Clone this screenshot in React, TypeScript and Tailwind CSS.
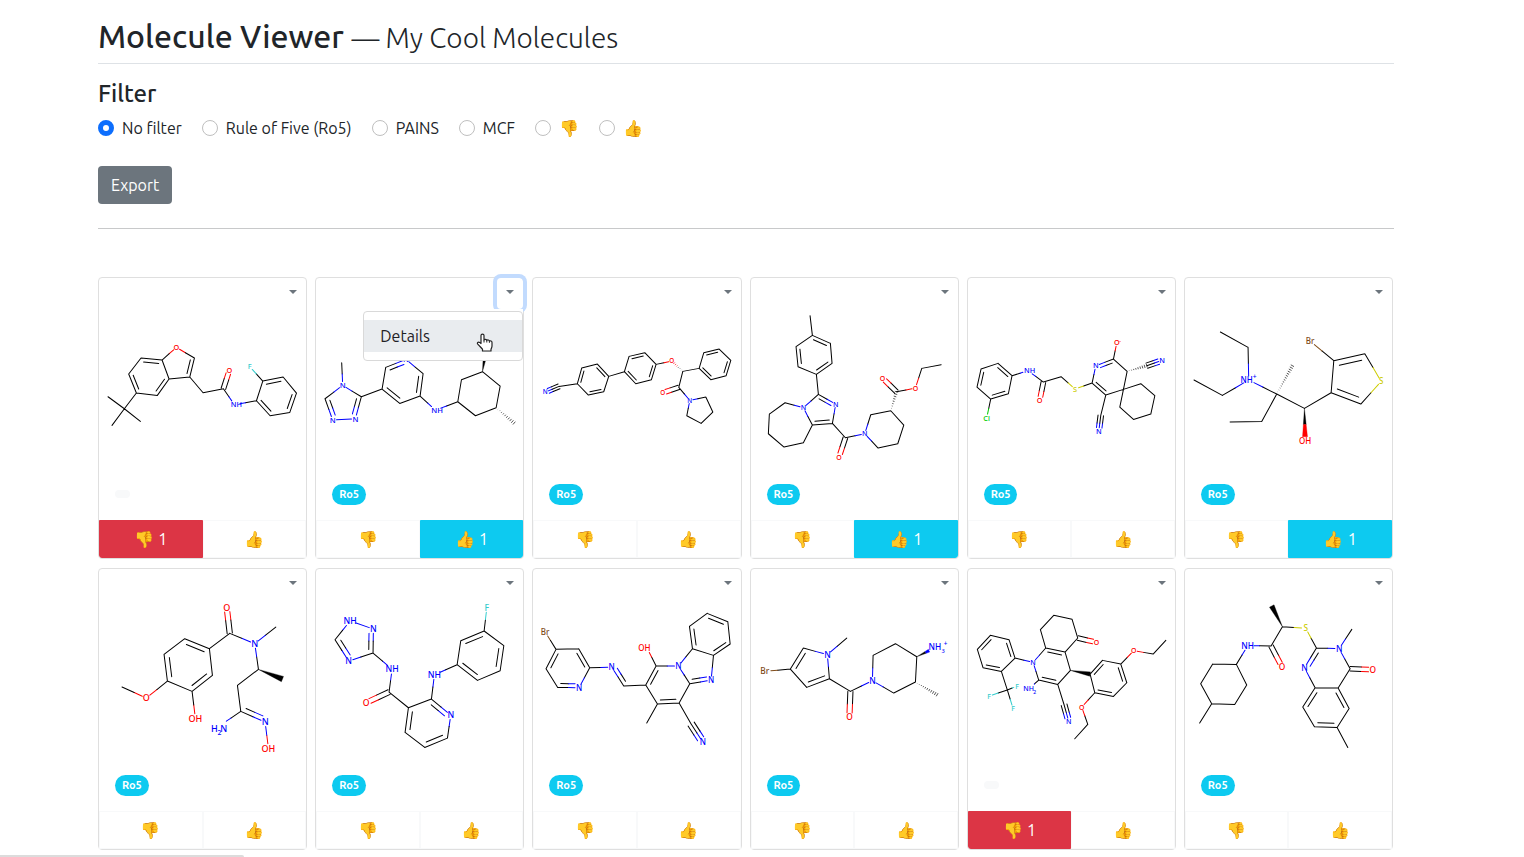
import { useState } from "react";

type Atom = { p: [number, number]; el?: string; label?: string; lx?: number };
type Extra = { x: number; y: number; text: string; el: string; size: number };
type Molecule = {
  view: string;
  font: number;
  atoms: string;
  bonds: string;
  rings: string;
  extras?: Extra[];
};
type CardData = { mol: Molecule; ro5: boolean; down?: number; up?: number; menu?: boolean };

const COLORS: Record<string, string> = {
  C: "#000000",
  N: "#0000ff",
  O: "#ff0000",
  F: "#33cccc",
  S: "#cccc00",
  Cl: "#00cc00",
  Br: "#7f4c19",
};

const ROW_ONE = "10 118 621 492";
const ROW_TWO = "10 106 621 492";

/* Atoms: "x,y[,element[,label[,labelX]]]". Bonds: "-" single, "=" double, "<" ">" one-sided double,
   "#" triple, "w" wedge, "h" hashed wedge. Rings: atom indexes, used to place inner lines. */
const molecules: Molecule[] = [
  {
    view: ROW_ONE,
    font: 22,
    atoms:
      "242,233,O 296,265 282,322 220,328 199,271 136,265 99,313 122,370 185,377 86,417 37,381 134,455 49,467 322,369 383,357 401,301,O 416,405,N,NH,422 482,393 501,334 462,291,F 562,322 602,370 582,428 523,438",
    bonds:
      "0-1 1=2 2-3 3-4 4-0 4=5 5-6 6=7 7-8 8=3 7-9 9-10 9-11 9-12 2-13 13-14 14=15 14-16 16-17 17-18 18-19 18=20 20-21 21=22 22-23 23=17",
    rings: "0 1 2 3 4|3 4 5 6 7 8|17 18 20 21 22 23",
  },
  {
    view: ROW_ONE,
    font: 23,
    atoms:
      "87,279 90,347,N 146,381 128,447,N 60,451,N 37,387 208,358 219,293 280,269,N 331,312 322,379 261,401 368,421,N,NH,373 435,396 446,330 509,306 562,349 550,414 488,438 518,250 604,460",
    bonds:
      "0-1 1-2 2=3 3-4 4=5 5-1 2-6 6-7 7=8 8-9 9=10 10-11 11=6 10-12 12-13 13-14 14-15 15-16 16-17 17-18 18-13 15w19 17h20",
    rings: "1 2 3 4 5|6 7 8 9 10 11",
  },
  {
    view: ROW_ONE,
    font: 19,
    atoms:
      "47,367,N 88,350 143,342 156,295 203,283 237,320 222,366 176,376 284,306 298,260 345,249 379,284 365,330 318,342 426,274,O 459,305 508,296 522,249 568,238 603,272 589,318 543,330 447,353 399,369,O 480,392,N 528,382 549,427 514,461 471,438",
    bonds:
      "0#1 1-2 2=3 3-4 4=5 5-6 6=7 7-2 5-8 8-9 9=10 10-11 11=12 12-13 13=8 11-14 15h14 15-16 16-17 17=18 18-19 19=20 20-21 21=16 15-22 22=23 22-24 24-25 25-26 26-27 27-28 28-24",
    rings: "2 3 4 5 6 7|8 9 10 11 12 13|16 17 18 19 20 21",
  },
  {
    view: ROW_ONE,
    font: 21,
    atoms:
      "187,138 194,197 248,221 253,281 206,314 151,291 145,231 212,374 264,403,N 254,461 194,466 167,414,N 112,399 65,433 62,492 109,532 167,519 293,504 274,562,O 351,492,N 369,435 429,423 468,466 450,522 391,535 446,366 404,325,O 503,355,O 522,296 580,285",
    bonds:
      "0-1 1=2 2-3 3=4 4-5 5=6 6-1 4-7 7=8 8-9 9=10 10-11 11-7 11-12 12-13 13-14 14-15 15-16 16-10 9-17 17=18 17-19 19-20 20-21 21-22 22-23 23-24 24-19 21h25 25=26 25-27 27-28 28-29",
    rings: "1 2 3 4 5 6|7 8 9 10 11",
  },
  {
    view: ROW_ONE,
    font: 22,
    atoms:
      "37,352 49,298 100,281 142,318 131,372 78,388 66,445,Cl 190,303,N,NH,195 236,337 225,392,O 289,321 331,358,S 382,340 393,288,N 446,268 456,219,O 487,305 476,359 423,376 408,437 402,485,N 546,288 592,272,N 528,342 570,378 558,433 506,449 465,412",
    bonds:
      "0=1 1-2 2=3 3-4 4=5 5-0 5-6 3-7 7-8 8=9 8-10 10-11 11-12 12-13 13=14 14-15 14-16 16-17 17-18 18=12 18-19 19#20 16h21 21#22 17-23 23-24 24-25 25-26 26-27 27-17",
    rings: "0 1 2 3 4 5|12 13 14 16 17 18",
    extras: [{ x: 466, y: 213, text: "-", el: "O", size: 16 }],
  },
  {
    view: ROW_ONE,
    font: 24,
    atoms:
      "116,187 199,233 201,331,N,NH,195 122,377 37,331 285,373 332,288 240,455 145,457 368,416 370,513,O,OH 448,369 456,273 385,214,Br 549,252 598,335,S 537,403",
    bonds: "0-1 1-2 2-3 3-4 2-5 5h6 5-7 7-8 5-9 9w10 9-11 11-12 12-13 12=14 14-15 15-16 16=11",
    rings: "11 12 14 15 16",
    extras: [{ x: 219, y: 322, text: "+", el: "N", size: 20 }],
  },
  {
    view: ROW_TWO,
    font: 27,
    atoms:
      "393,128,O 402,206 477,237,N 540,187 488,314 560,343 425,362 435,440 376,480,N,_ 508,472,N 518,551,O,OH 341,252 267,222 205,269 215,349 289,380 350,332 299,461,O,OH 152,400,O 79,367",
    bonds:
      "0=1 1-2 2-3 2-4 4w5 4-6 6-7 7-8 7<9 9-10 1-11 11=12 12-13 13=14 14-15 15=16 16-11 15-17 14-18 18-19",
    rings: "11 12 13 14 15 16",
    extras: [
      { x: 356, y: 491, text: "H", el: "N", size: 27 },
      { x: 371, y: 504, text: "2", el: "N", size: 20 },
      { x: 384, y: 491, text: "N", el: "N", size: 27 },
    ],
  },
  {
    view: ROW_TWO,
    font: 26,
    atoms:
      "112,169,N,NH 182,193,N 181,265 108,289,N 67,225 238,314,N,NH 229,382 160,414,O 287,429 356,403 414,451,N 404,520 336,548 277,503 365,330,N,NH 433,300 444,228 514,199 573,243 562,318 494,347 522,130,F",
    bonds:
      "0-1 1=2 2-3 3=4 4-0 2-5 5-6 6=7 6-8 8=13 13-12 12=11 11-10 10=9 9-8 9-14 14-15 15-16 16=17 17-18 18=19 19-20 20=15 17-21",
    rings: "0 1 2 3 4|8 9 10 11 12 13|15 16 17 18 19 20",
  },
  {
    view: "661 106 621 492",
    font: 24,
    atoms:
      "697,201,Br 730,254 798,252 831,309 799,369,N 735,368 700,312 897,307,N 933,364 999,361 1030,304 1003,250,O,OH,995 1097,304,N 1131,357 1099,415 1034,418 1002,475 1135,478 1170,532,N 1195,346,N 1202,272 1139,252 1130,185 1183,146 1245,171 1252,238",
    bonds:
      "0-1 1-2 2=3 3-4 4=5 5-6 6=1 3-7 7<8 8-9 9=10 10-11 10-12 12-13 13-14 14=15 15-9 15-16 14-17 17#18 13=19 19-20 20-21 21-12 21=22 22-23 23=24 24-25 25=20",
    rings: "1 2 3 4 5 6|9 10 12 13 14 15|12 13 19 20 21|20 21 22 23 24 25",
  },
  {
    view: ROW_TWO,
    font: 25,
    atoms:
      "297,220 239,270,N 167,250 128,313 51,320,Br 177,368 245,342 308,380 305,457,O 374,348,N 376,272 443,237 507,276 503,352 438,385 560,250,N,_ 568,390",
    bonds: "0-1 1-2 2=3 3-4 3-5 5=6 6-1 6-7 7=8 7-9 9-10 10-11 11-12 12-13 13-14 14-9 12w15 13h16",
    rings: "1 2 3 5 6",
    extras: [
      { x: 561, y: 247, text: "NH", el: "N", size: 25 },
      { x: 586, y: 260, text: "3", el: "N", size: 17 },
      { x: 593, y: 238, text: "+", el: "N", size: 19 },
    ],
  },
  {
    view: ROW_TWO,
    font: 21,
    atoms:
      "38,254 77,212 133,225 151,280 110,320 55,309 205,293,N 243,250 227,195 267,152 322,164 339,220 395,233,O 301,262 317,317 279,359 222,346 198,368,N,_ 298,420 312,470,N 376,328 413,287 468,298 486,354 446,395 390,384 351,427,O 369,479 330,522 507,258,O 565,268 603,227 128,376 73,394,F 157,364,F 145,431,F",
    bonds:
      "0=1 1-2 2=3 3-4 4=5 5-0 3-6 6-7 7>13 7-8 8-9 9-10 10-11 11=12 11-13 13-14 14-15 15=16 16-6 16-17 15-18 18#19 14w20 20=21 21-22 22=23 23-24 24=25 25-20 25-26 26-27 27-28 22-29 29-30 30-31 4-32 32-33 32-34 32-35",
    rings: "0 1 2 3 4 5|6 7 13 14 15 16|20 21 22 23 24 25",
    extras: [
      { x: 192, y: 371, text: "NH", el: "N", size: 21 },
      { x: 210, y: 381, text: "2", el: "N", size: 15 },
    ],
  },
  {
    view: ROW_TWO,
    font: 25,
    atoms:
      "270,124 302,186 372,191,S 268,244 301,307,O 198,243,N,NH 164,299 195,361 159,419 90,417 57,357 93,298 54,475 404,250 368,309,N 400,369 469,370 505,312 472,252,N 510,194 573,315,O 502,431 466,488 398,486 363,427 498,548",
    bonds:
      "1w0 1-2 1-3 3=4 3-5 5-6 6-7 7-8 8-9 9-10 10-11 11-6 9-12 2-13 13=14 14-15 15-16 16-17 17-18 18-13 18-19 17=20 16=21 21-22 22=23 23-24 24=15 22-25",
    rings: "13 14 15 16 17 18|15 16 21 22 23 24",
  },
];

const names = [
  "Benzofuran acetamide",
  "Triazolyl pyridine",
  "Biaryl nitrile",
  "Imidazoazepine",
  "Spiro dinitrile",
  "Bromothiophene",
  "Amidoxime",
  "Triazole carboxamide",
  "Benzimidazole imine",
  "Bromopyrrole amide",
  "Hexahydroquinoline",
  "Quinazolinone",
];

const cards: CardData[] = molecules.map((mol, i) => ({
  mol,
  ro5: i !== 0 && i !== 10,
  down: i === 0 || i === 10 ? 1 : undefined,
  up: i === 1 || i === 3 || i === 5 ? 1 : undefined,
  menu: i === 1,
}));

function parseAtoms(src: string): Atom[] {
  return src.split(" ").map((s) => {
    const [x, y, el, label, lx] = s.split(",");
    return { p: [Number(x), Number(y)], el, label, lx: lx ? Number(lx) : undefined };
  });
}

function Structure({ mol, title }: { mol: Molecule; title: string }) {
  const atoms = parseAtoms(mol.atoms);
  const centers = mol.rings.split("|").map((r) => {
    const ids = r.split(" ").map(Number);
    return [
      ids.reduce((s, i) => s + atoms[i].p[0], 0) / ids.length,
      ids.reduce((s, i) => s + atoms[i].p[1], 0) / ids.length,
    ];
  });
  const lines: Record<string, string> = {};
  const fills: { d: string; color: string }[] = [];
  const add = (el: string, x1: number, y1: number, x2: number, y2: number) => {
    lines[el] = (lines[el] ?? "") + `M${x1.toFixed(1)} ${y1.toFixed(1)}L${x2.toFixed(1)} ${y2.toFixed(1)}`;
  };

  for (const b of mol.bonds.split(" ")) {
    const m = /(\d+)([-=<>#wh])(\d+)/.exec(b);
    if (!m) continue;
    const a = atoms[Number(m[1])];
    const c = atoms[Number(m[3])];
    const kind = m[2];
    const dx = c.p[0] - a.p[0];
    const dy = c.p[1] - a.p[1];
    const len = Math.hypot(dx, dy);
    const nx = dy / len;
    const ny = -dx / len;
    const trim = mol.font * 0.5;
    const gap = (t: Atom) => {
      if (!t.el) return 0;
      const wide = t.label || t.el.length > 1;
      return wide ? trim + Math.abs(dx / len) * mol.font * 0.25 : trim;
    };
    const ta = gap(a) / len;
    const tc = 1 - gap(c) / len;
    const ea = a.el ?? "C";
    const ec = c.el ?? "C";
    const stroke = (off: number, t0: number, t1: number) => {
      const at = (t: number): [number, number] => [a.p[0] + dx * t + nx * off, a.p[1] + dy * t + ny * off];
      if (ea === ec) add(ea, ...at(t0), ...at(t1));
      else {
        add(ea, ...at(t0), ...at(0.5));
        add(ec, ...at(0.5), ...at(t1));
      }
    };
    if (kind === "-") stroke(0, ta, tc);
    else if (kind === "#") {
      stroke(0, ta, tc);
      stroke(len * 0.17, ta, tc);
      stroke(-len * 0.17, ta, tc);
    } else if (kind === "w" || kind === "h") {
      const w = kind === "w" ? Math.min(8.5, len * 0.11) : Math.min(5.5, len * 0.09);
      const at = (t: number, s: number) =>
        `${(a.p[0] + dx * t + nx * w * t * s).toFixed(1)} ${(a.p[1] + dy * t + ny * w * t * s).toFixed(1)}`;
      const split = ea === ec ? tc : 0.5;
      if (kind === "w") {
        fills.push({ d: `M${at(0, 1)}L${at(split, 1)}L${at(split, -1)}Z`, color: COLORS[ea] });
        if (split < tc)
          fills.push({ d: `M${at(split, 1)}L${at(tc, 1)}L${at(tc, -1)}L${at(split, -1)}Z`, color: COLORS[ec] });
      } else {
        const n = Math.round(len / 7);
        for (let i = 1; i <= n; i++) {
          const t = (i / n) * tc;
          const el = t > split ? ec : ea;
          lines["h" + el] = (lines["h" + el] ?? "") + `M${at(t, 1)}L${at(t, -1)}`;
        }
      }
    } else {
      const mx = a.p[0] + dx / 2;
      const my = a.p[1] + dy / 2;
      let side = kind === "<" ? 1 : kind === ">" ? -1 : 0;
      if (!side) {
        let best = len * 1.15;
        for (const [cx, cy] of centers) {
          const d = Math.hypot(cx - mx, cy - my);
          if (d < best) {
            best = d;
            side = (cx - mx) * nx + (cy - my) * ny > 0 ? 1 : -1;
          }
        }
      }
      if (side) {
        stroke(0, ta, tc);
        stroke(side * len * 0.18, Math.max(ta, 0.14), Math.min(tc, 0.86));
      } else {
        const off = Math.max(7, len * 0.1);
        stroke(off, ta, tc);
        stroke(-off, ta, tc);
      }
    }
  }

  return (
    <svg viewBox={mol.view} role="img" aria-label={title} className="relative block h-auto w-full bg-white">
      {fills.map((f, i) => (
        <path key={i} d={f.d} fill={f.color} stroke={f.color} strokeWidth="1" />
      ))}
      {Object.entries(lines).map(([el, d]) => (
        <path
          key={el}
          d={d}
          fill="none"
          stroke={COLORS[el.replace("h", "")]}
          strokeWidth={el.startsWith("h") ? 2 : 3}
          strokeLinecap={el.startsWith("h") ? "butt" : "round"}
        />
      ))}
      <g textAnchor="middle" className="font-['Noto_Sans',sans-serif] font-medium">
        {atoms.map((t, i) =>
          t.el && t.label !== "_" ? (
            <text key={i} x={t.lx ?? t.p[0]} y={t.p[1] + mol.font * 0.36} fontSize={mol.font} fill={COLORS[t.el]}>
              {t.label ?? t.el}
            </text>
          ) : null,
        )}
        {mol.extras?.map((e, i) => (
          <text key={i} x={e.x} y={e.y + e.size * 0.36} fontSize={e.size} fill={COLORS[e.el]}>
            {e.text}
          </text>
        ))}
      </g>
    </svg>
  );
}

function HandPointer() {
  return (
    <svg viewBox="0 0 18 19" className="pointer-events-none absolute top-[21px] right-7 w-[18px]" aria-hidden="true">
      <path
        d="M5 10.5V2.6C5 .6 8 .6 8 2.6V7c.6-.9 2.6-.7 2.8.4.8-.8 2.4-.4 2.6.7 1-.6 2.6-.1 2.6 1.3V13c0 1.500-.8 2.500-1 3.200V18H6.500v-1.800C5 14.800 3.600 12.800 1.800 11.200.6 10 2.200 8.400 3.600 9.400Z"
        fill="#fff"
        stroke="#222"
        strokeWidth="1.2"
        strokeLinejoin="round"
      />
      <path d="M8 7v2.500M10.800 7.500v2M13.400 8.200v1.600" stroke="#222" strokeWidth="1" fill="none" />
    </svg>
  );
}

function VoteButton({ up, count }: { up?: boolean; count?: number }) {
  const look = count
    ? up
      ? "border-[#0dcaf0] bg-[#0dcaf0] rounded-br-[3px]"
      : "border-[#dc3545] bg-[#dc3545] rounded-bl-[3px]"
    : "border-[#f8f9fa] bg-white";
  return (
    <button
      type="button"
      aria-label={up ? "Like" : "Dislike"}
      className={`flex h-[38px] flex-1 items-center justify-center gap-1 border text-white ${look}`}
    >
      <span>{up ? "👍" : "👎"}</span>
      {count ? <span>{count}</span> : null}
    </button>
  );
}

function MoleculeCard({ card, name }: { card: CardData; name: string }) {
  const [open, setOpen] = useState(Boolean(card.menu));
  return (
    <article className="rounded border border-[#dfdfdf] bg-white">
      <div className="relative flex justify-end">
        <button
          type="button"
          aria-label={`Options for ${name}`}
          aria-expanded={open}
          onClick={() => setOpen(!open)}
          className={`flex h-[31px] w-[26px] justify-center rounded pt-3 outline-none ${open ? "shadow-[0_0_0_4px_#c2dbfe]" : ""}`}
        >
          <span className="border-x-4 border-t-4 border-x-transparent border-t-[#6c757d]" />
        </button>
        {open && (
          <div className="absolute top-[33px] right-0 z-10 w-40 rounded border border-[#d9d9d9] bg-white py-2">
            <a href="#details" className="block bg-[#e9ecef] px-4 leading-8 text-[#1e2125]">
              Details
            </a>
            <HandPointer />
          </div>
        )}
      </div>
      <Structure mol={card.mol} title={name} />
      <div className="flex h-[47px] items-start px-4 pt-[11px]">
        {card.ro5 ? (
          <span className="rounded-full bg-[#0dcaf0] px-[7px] text-[11px] leading-[21px] font-bold text-white">Ro5</span>
        ) : (
          <span className="mt-[6px] h-2 w-[15px] rounded-full bg-[#f8f9fa]" />
        )}
      </div>
      <div className="flex">
        <VoteButton count={card.down} />
        <VoteButton up count={card.up} />
      </div>
    </article>
  );
}

const filters = ["No filter", "Rule of Five (Ro5)", "PAINS", "MCF", "👎", "👍"];

export default function App() {
  return (
    <main className="pr-[130px] pl-[98px] font-['Ubuntu','Noto_Sans','Noto_Color_Emoji',sans-serif] text-base leading-6 text-[#212529]">
      <h1 className="border-b border-[#dee2e6] pt-[17px] pb-2 text-[32px] leading-[38px] font-[560]">
        Molecule Viewer <span className="text-[28px] leading-none font-light">— My Cool Molecules</span>
      </h1>
      <h2 id="filter-heading" className="pt-4 text-2xl leading-7 font-[560]">
        Filter
      </h2>
      <div role="radiogroup" aria-labelledby="filter-heading" className="flex items-center gap-5 pt-2">
        {filters.map((f, i) => (
          <label key={f} className="flex items-center gap-2">
            <input
              type="radio"
              name="filter"
              defaultChecked={i === 0}
              className="size-4 appearance-none rounded-full border border-[#bfbfbf] bg-white checked:border-[5px] checked:border-[#0d6efd]"
            />
            {f}
          </label>
        ))}
      </div>
      <button type="button" className="mt-[26px] h-[38px] rounded bg-[#6c757d] px-[13px] text-white">
        Export
      </button>
      <hr className="mt-6 mb-12 border-[#c8c9ca]" />
      <section className="grid grid-cols-6 gap-x-2 gap-y-[9px] pr-px">
        {cards.map((c, i) => (
          <MoleculeCard key={names[i]} card={c} name={names[i]} />
        ))}
      </section>
      <div className="fixed bottom-0 left-0 h-[2px] w-[244px] rounded-tr bg-[#dcdcdc]" />
    </main>
  );
}
